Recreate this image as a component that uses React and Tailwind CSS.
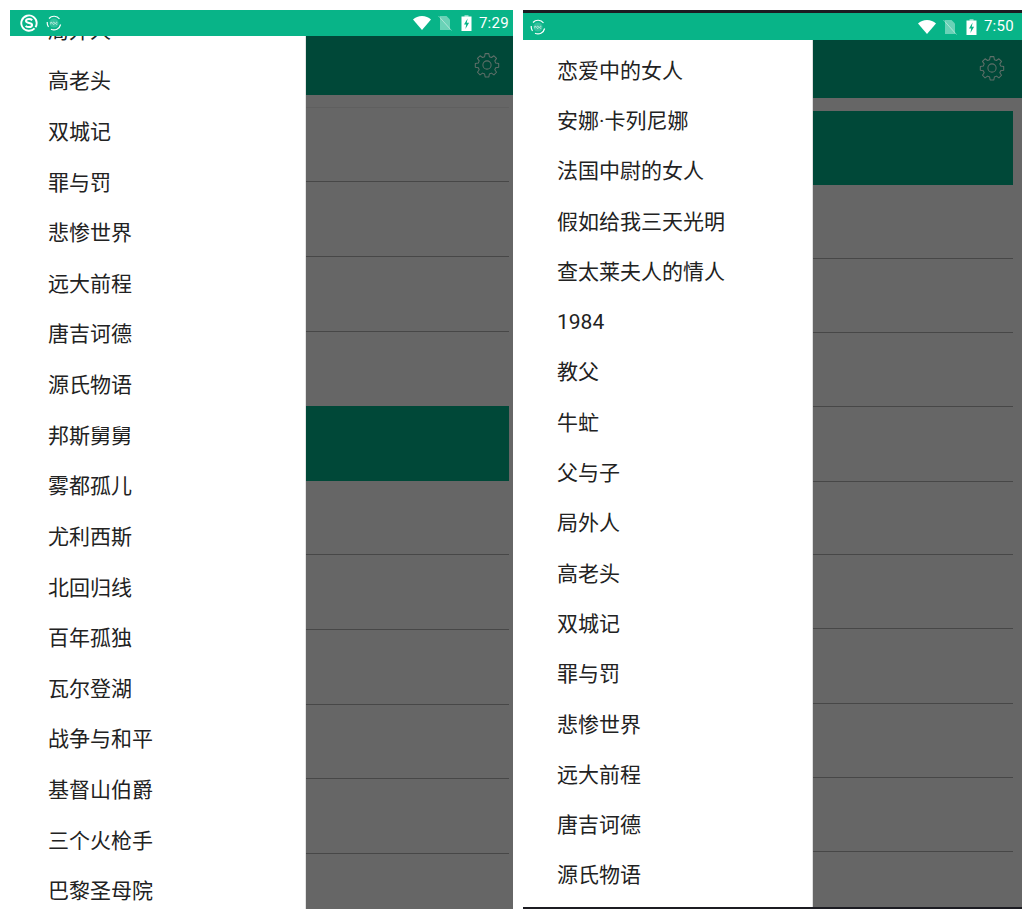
import React from "react";

const GREEN = "bg-[#08b488]";
const leftBooks = ["局外人","高老头","双城记","罪与罚","悲惨世界","远大前程","唐吉诃德","源氏物语","邦斯舅舅","雾都孤儿","尤利西斯","北回归线","百年孤独","瓦尔登湖","战争与和平","基督山伯爵","三个火枪手","巴黎圣母院"];
const rightBooks = ["恋爱中的女人","安娜·卡列尼娜","法国中尉的女人","假如给我三天光明","查太莱夫人的情人","1984","教父","牛虻","父与子","局外人","高老头","双城记","罪与罚","悲惨世界","远大前程","唐吉诃德","源氏物语"];

function Wifi() {
  return <svg width="18" height="14" viewBox="0 0 18 14" className="block"><path d="M0 3.6C2.4 1.4 5.5 0 9 0s6.6 1.4 9 3.6L9 14z" fill="#fff" /></svg>;
}
function Sim() {
  return (
    <svg width="14" height="16" viewBox="0 0 14 16" className="block">
      <path d="M2 1h6.5L12 4.5V15H2z" fill="#fff" opacity="0.4" />
      <path d="M0.5 1L13.5 15.5" stroke="#fff" strokeWidth="1" opacity="0.45" />
    </svg>
  );
}
function Battery() {
  return (
    <svg width="11" height="16" viewBox="0 0 11 16" className="block">
      <rect x="3.5" y="0" width="4" height="2" fill="#fff" opacity="0.5" />
      <rect x="0.5" y="1.5" width="10" height="14.5" fill="#fff" />
      <path d="M6.6 3.5L3 9.4h2.2L4.4 14l3.7-6.2H5.8z" fill="#08b488" />
    </svg>
  );
}
function SogouIcon() {
  return (
    <svg width="18" height="18" viewBox="0 0 18 18" fill="none" className="block">
      <path d="M14.6 14.4A7.7 7.7 0 1 1 16.7 9c0 1.6-.4 3-1.2 4.2" stroke="#fff" strokeWidth="1.9" />
      <path d="M12.2 6.2C11.4 5.4 10.2 5 9 5 7.300 5 6 5.800 6 7.100c0 2.700 6.100 1.300 6.100 3.900 0 1.300-1.400 2.100-3.100 2.100-1.300 0-2.500-.4-3.400-1.200" stroke="#fff" strokeWidth="2" />
    </svg>
  );
}
function RingIcon() {
  return (
    <svg width="16" height="16" viewBox="0 0 16 16" fill="none" className="block">
      <path d="M3 3.500A6.800 6.800 0 0 1 13.500 4M14.600 9.500A6.800 6.800 0 0 1 5 14.200M2.500 12A6.800 6.800 0 0 1 1.300 7" stroke="#fff" strokeWidth="1.200" />
      <circle cx="8" cy="8" r="4.600" fill="#fff" opacity="0.18" />
      <path d="M4.800 9.400V7.200M4.800 8c.3-.7.700-.9 1.200-.8M7.700 7.200a1.100 1.100 0 1 0 .01 0M11.300 7.500a1 1 0 1 0 0 1.600" stroke="#fff" strokeWidth="0.600" />
    </svg>
  );
}
function Gear() {
  return (
    <svg width="26" height="26" viewBox="0 0 24 24" fill="none" stroke="#5f6f69" strokeWidth="0.95" strokeLinejoin="round" className="block">
      <path d="M10.300 1.500h3.400l.5 2.800 1.900.8 2.300-1.600 2.400 2.400-1.600 2.300.8 1.900 2.800.5v3.400l-2.800.5-.8 1.900 1.600 2.300-2.400 2.400-2.300-1.600-1.900.8-.5 2.800h-3.400l-.5-2.800-1.900-.8-2.300 1.600-2.400-2.400 1.600-2.300-.8-1.900-2.800-.5v-3.400l2.800-.5.8-1.900-1.600-2.300 2.400-2.400 2.300 1.600 1.900-.8z" />
      <circle cx="12" cy="12" r="3.800" />
    </svg>
  );
}

function StatusBar({ h, time, sogou, padL, padR }) {
  return (
    <div className={`flex items-center ${GREEN} ${h} shrink-0 text-white`}>
      <div className={`flex items-center gap-[8px] ${padL}`}>
        {sogou && <SogouIcon />}
        <RingIcon />
      </div>
      <div className={`ml-auto flex items-center ${padR}`}>
        <Wifi />
        <span className="ml-[7px]"><Sim /></span>
        <span className="ml-[9px]"><Battery /></span>
        <span className="ml-[7px] text-[15px] leading-none font-['Roboto',sans-serif] tracking-[0.3px]">{time}</span>
      </div>
    </div>
  );
}

function BookRow({ title, rowClass }) {
  return (
    <div className={`${rowClass} flex items-center text-[21px] leading-none text-[#222222] font-['Roboto','Noto_Sans_CJK_SC',sans-serif]`}>
      {title}
    </div>
  );
}

function Cell({ h, selected, line = true, faint }) {
  return (
    <div className={`${h} ${selected ? "bg-[#004838]" : ""} ${line ? (faint ? "border-b border-[#5f5f5f]" : "border-b border-[#474747]") : ""}`} />
  );
}

export default function App() {
  return (
    <div className="w-[1032px] h-[919px] bg-white flex items-start overflow-hidden">
      <div className="ml-[10px] mt-[10px] w-[503px] h-[899px] flex flex-col">
        <StatusBar h="h-[26px]" time="7:29" sogou padL="pl-[10px]" padR="pr-[4px]" />
        <div className="flex flex-1 min-h-0">
          <div className="w-[296px] shrink-0 overflow-hidden bg-white border-r border-[#e3e3e3] pl-[38px]">
            <div className="-mt-[30px]">
              {leftBooks.map((b, i) => <BookRow key={i} title={b} rowClass="h-[50.62px]" />)}
            </div>
          </div>
          <div className="flex-1 bg-[#666666] flex flex-col overflow-hidden">
            <div className="h-[59px] shrink-0 bg-[#004838] flex items-center justify-end pr-[13px] pb-[2px]"><Gear /></div>
            <div className="pr-[4px]">
              <Cell h="h-[13px]" faint />
              <Cell h="h-[74px]" />
              <Cell h="h-[75px]" />
              <Cell h="h-[75px]" />
              <Cell h="h-[74px]" line={false} />
              <Cell h="h-[75px]" selected line={false} />
              <Cell h="h-[74px]" />
              <Cell h="h-[75px]" />
              <Cell h="h-[75px]" />
              <Cell h="h-[74px]" />
              <Cell h="h-[75px]" />
            </div>
          </div>
        </div>
      </div>
      <div className="ml-[10px] mt-[10px] w-[499px] h-[899px] flex flex-col border-t-[3px] border-b-[2px] border-[#1c1c22]">
        <StatusBar h="h-[27px]" time="7:50" padL="pl-[7px]" padR="pr-[8px]" />
        <div className="flex flex-1 min-h-0">
          <div className="w-[290px] shrink-0 overflow-hidden bg-white border-r border-[#dedede] pl-[34px]">
            <div className="mt-[6px]">
              {rightBooks.map((b, i) => <BookRow key={i} title={b} rowClass="h-[50.31px]" />)}
            </div>
          </div>
          <div className="flex-1 bg-[#666666] flex flex-col overflow-hidden">
            <div className="h-[58px] shrink-0 bg-[#004838] flex items-center justify-end pr-[17px] pb-[2px]"><Gear /></div>
            <div className="pr-[9px] pt-[13px]">
              <Cell h="h-[74px]" selected line={false} />
              <Cell h="h-[74px]" />
              <Cell h="h-[74px]" />
              <Cell h="h-[74px]" />
              <Cell h="h-[75px]" />
              <Cell h="h-[73px]" />
              <Cell h="h-[74px]" />
              <Cell h="h-[75px]" />
              <Cell h="h-[74px]" />
              <Cell h="h-[74px]" />
            </div>
          </div>
        </div>
      </div>
    </div>
  );
}
